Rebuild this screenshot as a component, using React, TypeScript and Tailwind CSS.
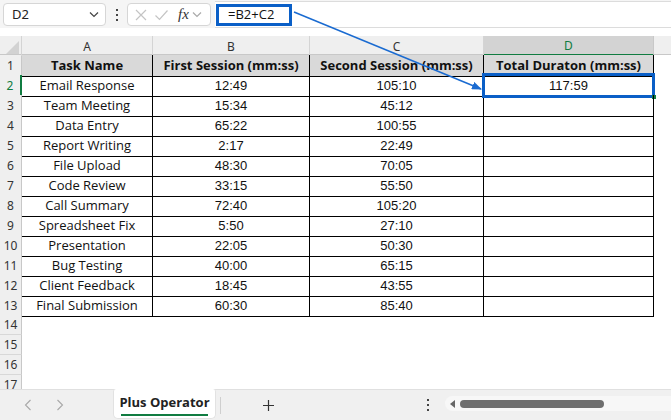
import React from "react";

const rows: [string, string, string, string][] = [
  ["Email Response", "12:49", "105:10", "117:59"],
  ["Team Meeting", "15:34", "45:12", ""],
  ["Data Entry", "65:22", "100:55", ""],
  ["Report Writing", "2:17", "22:49", ""],
  ["File Upload", "48:30", "70:05", ""],
  ["Code Review", "33:15", "55:50", ""],
  ["Call Summary", "72:40", "105:20", ""],
  ["Spreadsheet Fix", "5:50", "27:10", ""],
  ["Presentation", "22:05", "50:30", ""],
  ["Bug Testing", "40:00", "65:15", ""],
  ["Client Feedback", "18:45", "43:55", ""],
  ["Final Submission", "60:30", "85:40", ""],
];

const cols = "grid grid-cols-[22px_131px_157px_174px_170px_1fr]";
const uiFont = { fontFamily: '"Noto Sans", "Open Sans", sans-serif' };
const cellFont = { fontFamily: '"Open Sans", "Noto Sans", sans-serif' };
const numFont = { fontFamily: '"Liberation Sans", Arial, sans-serif' };

function Chevron({ className = "" }: { className?: string }) {
  return (
    <svg width="10" height="7" viewBox="0 0 10 7" className={className}>
      <path d="M1 1.5 L5 5.5 L9 1.5" fill="none" stroke="currentColor" strokeWidth="1.2" />
    </svg>
  );
}

function VDots({ className = "" }: { className?: string }) {
  return (
    <div className={"flex flex-col items-center gap-[3px] " + className}>
      <div className="w-[2px] h-[2px] bg-[#444]" />
      <div className="w-[2px] h-[2px] bg-[#444]" />
      <div className="w-[2px] h-[2px] bg-[#444]" />
    </div>
  );
}

export default function App() {
  return (
    <div className="relative w-[671px] h-[420px] overflow-hidden bg-white" style={uiFont}>
      {/* Toolbar */}
      <div className="flex h-[28px] bg-[#f5f5f5]">
        <div className="flex items-center pl-[3px] pt-[1px]">
          <div className="w-[103px] h-[23px] bg-white border border-[#d6d6d6] rounded-[4px] flex items-center justify-between pl-[8px] pr-[6px] text-[13px] text-[#222]">
            <span>D2</span>
            <Chevron className="text-[#444]" />
          </div>
          <VDots className="ml-[10px] mr-[9px]" />
          <div className="w-[84px] h-[23px] bg-white border border-[#d6d6d6] rounded-[4px] flex items-center pl-[6px] text-[#c4c4c4]">
            <svg width="14" height="14" viewBox="0 0 14 14">
              <path d="M2 2 L12 12 M12 2 L2 12" stroke="currentColor" strokeWidth="1.2" />
            </svg>
            <svg width="15" height="14" viewBox="0 0 15 14" className="ml-[6px]">
              <path d="M1.5 7.5 L5.5 11.5 L13.5 2.5" fill="none" stroke="currentColor" strokeWidth="1.2" />
            </svg>
            <span className="ml-[9px] text-[15px] italic text-[#333] leading-none" style={{ fontFamily: '"Liberation Serif", serif' }}>
              fx
            </span>
            <Chevron className="ml-[3px] text-[#aaa]" />
          </div>
        </div>
        <div className="flex-1 ml-[4px] bg-white border-y border-[#dcdcdc] mt-[1px] flex items-center">
          <div className="ml-[1px] w-[76px] h-[22px] border-[3px] border-[#0a5fc7] flex items-center pl-[9px] text-[13px] text-[#111]" style={cellFont}>
            =B2+C2
          </div>
        </div>
      </div>
      <div className="h-[8px] bg-white" />

      {/* Grid */}
      <div className="h-[353px] overflow-hidden">
        {/* Column header */}
        <div className={cols + " h-[19px] bg-[#efefef] border-b border-[#c8c8c8] text-[12px] text-[#333]"}>
          <div className="relative border-r border-[#d4d4d4]">
            <div className="absolute right-[2px] bottom-[2px] w-0 h-0 border-l-[13px] border-l-transparent border-b-[13px] border-b-[#d2d2d2]" />
          </div>
          <div className="border-r border-[#d4d4d4] flex items-center justify-center pt-[1px]">A</div>
          <div className="border-r border-[#d4d4d4] flex items-center justify-center pt-[1px]">B</div>
          <div className="border-r border-[#d4d4d4] flex items-center justify-center pt-[1px]">C</div>
          <div className="bg-[#d3d3d3] border-r border-[#c8c8c8] border-b-2 border-b-[#107c41] flex items-center justify-center text-[#107c41] h-[20px] pt-[1px]">
            D
          </div>
          <div />
        </div>

        {/* Row 1 */}
        <div className={cols + " h-[20px]"}>
          <div className="bg-[#efefef] border-r border-[#c8c8c8] border-b border-b-[#d8d8d8] flex items-center justify-center text-[12px] text-[#333] pt-[1px]">1</div>
          {["Task Name", "First Session (mm:ss)", "Second Session (mm:ss)", "Total Duraton (mm:ss)"].map((t) => (
            <div
              key={t}
              className="bg-[#d9d9d9] border-b border-black border-r border-r-black flex items-center justify-center font-bold text-[13px] text-[#111] pt-[1px]"
              style={cellFont}
            >
              {t}
            </div>
          ))}
          <div />
        </div>

        {rows.map((r, idx) => {
          const n = idx + 2;
          const sel = n === 2;
          return (
            <div key={n} className={cols + " h-[20px]"}>
              <div
                className={
                  "bg-[#efefef] border-b border-b-[#d8d8d8] flex items-center justify-center text-[12px] pt-[1px] " +
                  (sel ? "border-r-2 border-r-[#107c41] text-[#107c41]" : "border-r border-r-[#c8c8c8] text-[#333]")
                }
              >
                {n}
              </div>
              <div className="border-r border-b border-black flex items-center justify-center text-[13px] text-[#111] pt-[1px]" style={cellFont}>
                {r[0]}
              </div>
              <div className="border-r border-b border-black flex items-center justify-center text-[13px] text-[#111] pt-[1px]" style={numFont}>
                {r[1]}
              </div>
              <div className="border-r border-b border-black flex items-center justify-center text-[13px] text-[#111] pt-[1px]" style={numFont}>
                {r[2]}
              </div>
              <div className="relative border-r border-b border-black flex items-center justify-center text-[13px] text-[#111] pt-[1px]" style={numFont}>
                {r[3]}
                {sel && (
                  <>
                    <div className="absolute left-[-2px] top-[-2px] right-[-2px] bottom-[-2px] border-[3px] border-[#0a5fc7]" />
                    <div className="absolute right-[-3px] bottom-[-3px] w-[4px] h-[4px] bg-[#107c41]" />
                  </>
                )}
              </div>
              <div />
            </div>
          );
        })}

        {[14, 15, 16, 17].map((n) => (
          <div key={n} className={cols + " h-[20px]"}>
            <div className="bg-[#efefef] border-r border-[#c8c8c8] border-b border-b-[#d8d8d8] flex items-center justify-center text-[12px] text-[#333] pt-[1px]">
              {n}
            </div>
            <div />
            <div />
            <div />
            <div />
            <div />
          </div>
        ))}
      </div>

      {/* Tab bar */}
      <div className="h-[31px] bg-[#f0f0f0] border-t border-[#e0e0e0] flex items-start relative">
        <div className="flex items-center h-[30px] pl-[24px] text-[#a8a8a8]">
          <svg width="8" height="12" viewBox="0 0 8 12">
            <path d="M6.5 1 L1.5 6 L6.5 11" fill="none" stroke="currentColor" strokeWidth="1.1" />
          </svg>
          <svg width="8" height="12" viewBox="0 0 8 12" className="ml-[24px]">
            <path d="M1.5 1 L6.5 6 L1.5 11" fill="none" stroke="currentColor" strokeWidth="1.1" />
          </svg>
        </div>
        <div className="ml-[49px] mt-[-1px] w-[103px] h-[30px] bg-white rounded-b-[5px] rounded-t-[3px] border border-[#e2e2e2] border-t-0 flex flex-col items-center justify-center">
          <span className="font-bold text-[13px] text-[#222] leading-none mt-[5px]" style={cellFont}>
            Plus Operator
          </span>
          <div className="w-[87px] h-[2px] bg-[#107c41] mt-[5px]" />
        </div>
        <div className="ml-[4px] mt-[7px] w-px h-[17px] bg-[#cfcfcf]" />
        <div className="ml-[41px] h-[30px] flex items-center text-[#333]">
          <svg width="13" height="13" viewBox="0 0 13 13">
            <path d="M6.5 1 V12 M1 6.5 H12" stroke="currentColor" strokeWidth="1.2" />
          </svg>
        </div>
        <div className="ml-[152px] h-[30px] flex items-center">
          <VDots />
        </div>
        <div className="ml-[16px] mt-[6px] flex-1 h-[15px] bg-[#f7f7f7] rounded-l-[8px] flex items-center pl-[5px]">
          <div className="w-0 h-0 border-y-[4px] border-y-transparent border-r-[5px] border-r-[#666]" />
          <div className="ml-[5px] w-[144px] h-[8px] rounded-full bg-[#6e6e6e]" />
        </div>
      </div>

      {/* Arrow overlay */}
      <svg className="absolute left-0 top-0 pointer-events-none" width="671" height="420">
        <defs>
          <marker id="ah" markerWidth="10" markerHeight="8" refX="9" refY="4" orient="auto" markerUnits="userSpaceOnUse">
            <path d="M0 0 L10 4 L0 8 Z" fill="#1a6bd1" />
          </marker>
        </defs>
        <line x1="294" y1="12" x2="481" y2="89" stroke="#1a6bd1" strokeWidth="1.5" markerEnd="url(#ah)" />
      </svg>
    </div>
  );
}
